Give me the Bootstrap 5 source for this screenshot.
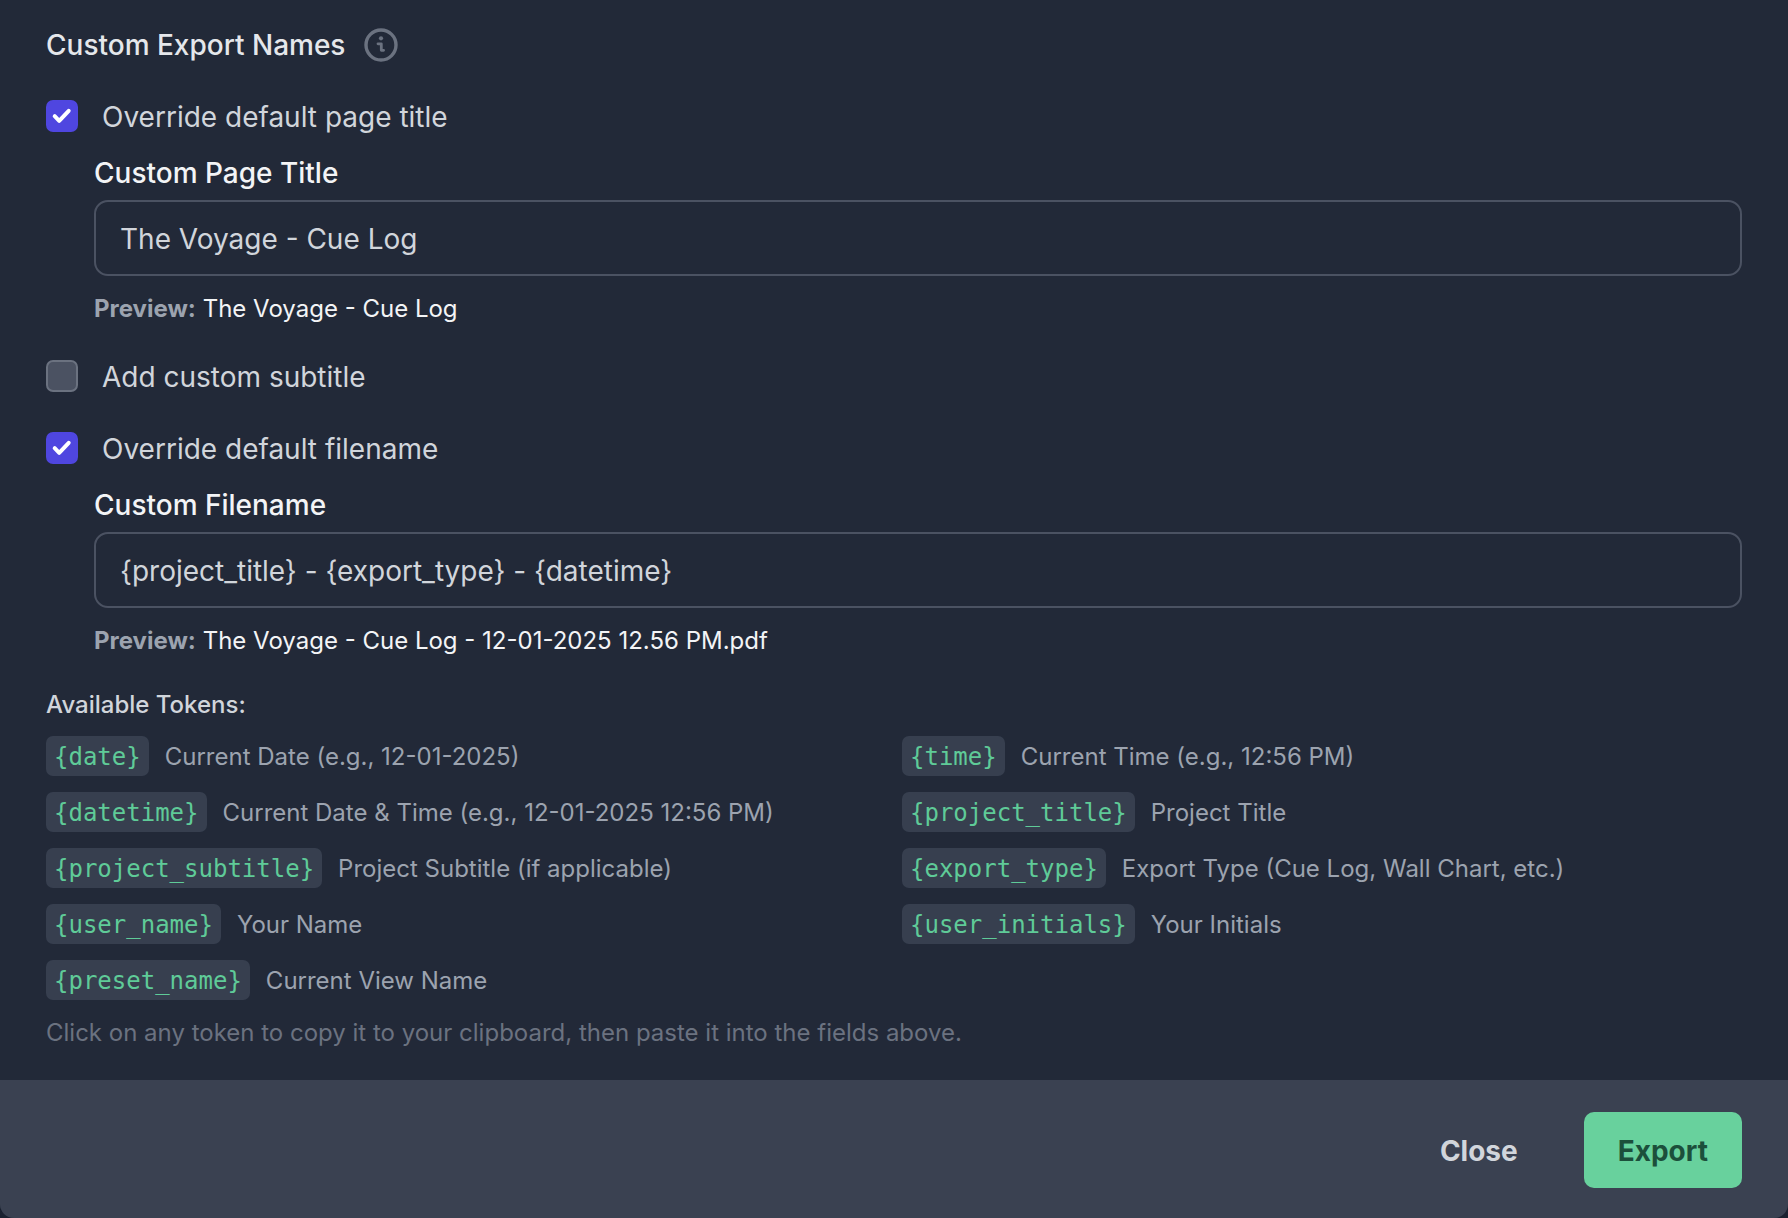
<!DOCTYPE html>
<html lang="en"><head><meta charset="utf-8"><title>Custom Export Names</title>
<link href="https://cdn.jsdelivr.net/npm/bootstrap@5.3.0/dist/css/bootstrap.min.css" rel="stylesheet">
<style>
html,body{height:100%;background:#1a2130;}
body{font-family:Inter,"Liberation Sans",sans-serif;color:#d1d5db;overflow:hidden;}
.sheet{width:1788px;height:1218px;background:#222938;border-bottom-right-radius:14px;border-bottom-left-radius:14px;overflow:hidden;display:flex;flex-direction:column;}
.sheet-body{flex:1 1 auto;padding:24px 46px 0 46px;}
.sheet-title{font-size:28px;font-weight:500;line-height:42px;color:#e5e7eb;margin:0;}
.info-ico{width:36px;height:36px;margin-left:18px;color:#6b7280;}
.opt-row{height:32px;gap:24px;}
.first-row{margin-top:34px;}
.add-row{margin-top:33px;}
.third-row{margin-top:40px;}
.opt-row .form-check-input{width:32px;height:32px;margin:0;flex:none;background-color:#4b5262;border:2px solid #6b7280;border-radius:7px;background-size:32px 32px;background-origin:border-box;}
.opt-row .form-check-input:checked{background-color:#4f46e0;border-color:#4f46e0;background-image:url("data:image/svg+xml,%3Csvg xmlns='http://www.w3.org/2000/svg' viewBox='0 0 32 32'%3E%3Cpath d='M8.700 16.200l4.500 4.600 9.500-10' fill='none' stroke='%23fff' stroke-width='4' stroke-linecap='round' stroke-linejoin='round'/%3E%3C/svg%3E");}
.opt-label{font-size:28px;line-height:32px;padding-top:2px;color:#d1d5db;margin:0;}
.sub-block{padding-left:48px;}
.field-label{font-size:28px;font-weight:500;line-height:42px;color:#f3f4f6;margin:20px 0 6px;display:block;}
.field-input{height:76px;font-size:28px;padding:2px 24px 0;background:#222938;color:#d1d5db;border:2px solid #4b5262;border-radius:14px;}
.field-input:focus{background:#222938;color:#d1d5db;border-color:#4b5262;box-shadow:none;}
.preview-line{font-size:24px;line-height:36px;margin:15px 0 0;color:#f3f4f6;}
.preview-line b{font-weight:700;color:#9ca3af;}
.tokens-head{font-size:24px;line-height:36px;font-weight:500;color:#d1d5db;margin:28px 0 0;}
.token-grid{display:grid;grid-template-columns:1fr 1fr;column-gap:16px;row-gap:16px;margin-top:13px;}
.token-item{display:flex;align-items:center;gap:16px;height:40px;}
.chip{font-family:"DejaVu Sans Mono","Liberation Mono",monospace;font-size:24px;line-height:42px;height:40px;padding:0 8px;background:#373f4f;color:#5fcb98;border-radius:7px;white-space:nowrap;}
.token-desc{font-size:24px;padding-top:2px;color:#9ca3af;white-space:nowrap;}
.hint-line{font-size:24px;line-height:36px;color:#6b7280;margin:15px 0 0;}
.sheet-foot{flex:none;height:138px;background:#3a4151;padding:32px 46px 30px;gap:32px;}
.foot-btn{font-size:28px;font-weight:700;height:76px;border-radius:10px;border:0;padding:2px 34px 0;}
.foot-close{background:transparent;color:#d1d5db;}
.foot-close:hover{background:transparent;color:#d1d5db;}
.foot-export{background:#68d19d;color:#1c4f3b;}
.foot-export:hover{background:#68d19d;color:#1c4f3b;}
</style></head>
<body>
<div class="sheet">
  <div class="sheet-body">
    <div class="d-flex align-items-center">
      <h5 class="sheet-title">Custom Export Names</h5>
      <svg class="info-ico" viewBox="0 0 36 36" fill="none" stroke="currentColor" stroke-width="3.400"><circle cx="18" cy="18" r="15"/><path d="M15 16.800h3.300v6.500h2.300" stroke-width="2.800" stroke-linecap="round" stroke-linejoin="round"/><circle cx="18" cy="11.300" r="2.100" fill="currentColor" stroke="none"/></svg>
    </div>
    <div class="d-flex align-items-center opt-row first-row">
      <input class="form-check-input" type="checkbox" id="o1" checked>
      <label class="opt-label" for="o1">Override default page title</label>
    </div>
    <div class="sub-block">
      <label class="field-label" for="i1">Custom Page Title</label>
      <input id="i1" class="form-control field-input" value="The Voyage - Cue Log">
      <p class="preview-line"><b>Preview:</b> The Voyage - Cue Log</p>
    </div>
    <div class="d-flex align-items-center opt-row add-row">
      <input class="form-check-input" type="checkbox" id="o2">
      <label class="opt-label" for="o2">Add custom subtitle</label>
    </div>
    <div class="d-flex align-items-center opt-row third-row">
      <input class="form-check-input" type="checkbox" id="o3" checked>
      <label class="opt-label" for="o3">Override default filename</label>
    </div>
    <div class="sub-block">
      <label class="field-label" for="i2">Custom Filename</label>
      <input id="i2" class="form-control field-input" value="{project_title} - {export_type} - {datetime}">
      <p class="preview-line"><b>Preview:</b> The Voyage - Cue Log - 12-01-2025 12.56 PM.pdf</p>
    </div>
    <p class="tokens-head">Available Tokens:</p>
    <div class="token-grid">
      <div class="token-item"><code class="chip">{date}</code><span class="token-desc">Current Date (e.g., 12-01-2025)</span></div>
      <div class="token-item"><code class="chip">{time}</code><span class="token-desc">Current Time (e.g., 12:56 PM)</span></div>
      <div class="token-item"><code class="chip">{datetime}</code><span class="token-desc">Current Date &amp; Time (e.g., 12-01-2025 12:56 PM)</span></div>
      <div class="token-item"><code class="chip">{project_title}</code><span class="token-desc">Project Title</span></div>
      <div class="token-item"><code class="chip">{project_subtitle}</code><span class="token-desc">Project Subtitle (if applicable)</span></div>
      <div class="token-item"><code class="chip">{export_type}</code><span class="token-desc">Export Type (Cue Log, Wall Chart, etc.)</span></div>
      <div class="token-item"><code class="chip">{user_name}</code><span class="token-desc">Your Name</span></div>
      <div class="token-item"><code class="chip">{user_initials}</code><span class="token-desc">Your Initials</span></div>
      <div class="token-item"><code class="chip">{preset_name}</code><span class="token-desc">Current View Name</span></div>
    </div>
    <p class="hint-line">Click on any token to copy it to your clipboard, then paste it into the fields above.</p>
  </div>
  <div class="sheet-foot d-flex justify-content-end align-items-center">
    <button type="button" class="btn foot-btn foot-close">Close</button>
    <button type="button" class="btn foot-btn foot-export">Export</button>
  </div>
</div>
<script src="https://cdn.jsdelivr.net/npm/bootstrap@5.3.0/dist/js/bootstrap.bundle.min.js"></script>
</body></html>
